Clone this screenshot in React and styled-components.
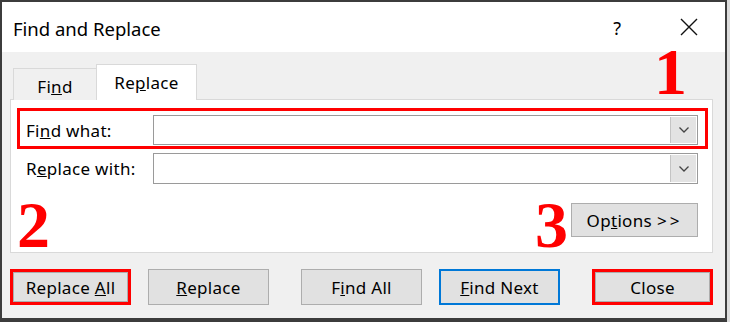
import React from "react";
import styled, { createGlobalStyle } from "styled-components";

const Global = createGlobalStyle`
  html, body { margin: 0; padding: 0; background: #dcdcdc; }
  body { font-family: "Noto Sans", "Open Sans", sans-serif; color: #000; }
`;

const Window = styled.div`
  position: relative;
  width: 727px;
  height: 322px;
  box-sizing: border-box;
  border: 2px solid #3c3c3c;
  border-bottom-width: 4px;
  background: #f0f0f0;
  display: flex;
  flex-direction: column;
`;

const TitleBar = styled.div`
  height: 50px;
  background: #fff;
  display: flex;
  align-items: center;
  padding: 0 26px 0 11px;
`;

const Title = styled.div`
  flex: 1;
  font-size: 18.5px;
  margin-top: 2px;
`;

const TitleIcons = styled.div`
  display: flex;
  align-items: center;
  gap: 58px;
`;

const Help = styled.span`
  font-size: 18px;
  margin-top: 2px;
`;

const Body = styled.div`
  flex: 1;
  display: flex;
  flex-direction: column;
  padding: 12px 12px 13px 8px;
`;

const TabRow = styled.div`
  display: flex;
  align-items: flex-end;
  margin-left: 3px;
  margin-bottom: -1px;
  position: relative;
  z-index: 1;
`;

const Tab = styled.div`
  box-sizing: border-box;
  width: ${(p) => p.$w}px;
  height: ${(p) => (p.$active ? 36 : 32)}px;
  margin-left: ${(p) => (p.$active ? -1 : 0)}px;
  border: 1px solid #d9d9d9;
  border-bottom: none;
  background: ${(p) => (p.$active ? "#fff" : "#f0f0f0")};
  display: flex;
  align-items: center;
  justify-content: center;
  font-size: 17px;
  letter-spacing: 0.3px;
  padding-top: ${(p) => (p.$active ? 0 : 3)}px;
`;

const Panel = styled.div`
  box-sizing: border-box;
  height: 154px;
  background: #fff;
  border: 1px solid #d9d9d9;
  padding: 8px 4px 0 6px;
  display: flex;
  flex-direction: column;
`;

const FieldRow = styled.div`
  display: grid;
  grid-template-columns: 127px 1fr;
  align-items: center;
  border: 3px solid ${(p) => (p.$hl ? "#ff0000" : "transparent")};
  padding: ${(p) => (p.$hl ? "4px 7px 1px 6px" : "1px 7px 1px 6px")};
`;

const Label = styled.label`
  font-size: 17px;
  letter-spacing: 0.3px;
`;

const Combo = styled.div`
  box-sizing: border-box;
  height: ${(p) => p.$h}px;
  border: 1px solid #9a9a9a;
  background: #fff;
  display: flex;
  justify-content: flex-end;
  padding: 1px;
`;

const DropButton = styled.div`
  box-sizing: border-box;
  width: 26px;
  background: #e3e3e3;
  border-left: 1px solid #c4c4c4;
  display: flex;
  align-items: center;
  justify-content: center;
`;

const OptionsRow = styled.div`
  display: flex;
  justify-content: flex-end;
  margin: 15px 10px 0 0;
`;

const Button = styled.div`
  box-sizing: border-box;
  width: ${(p) => p.$w || 121}px;
  height: ${(p) => p.$h || 36}px;
  background: #e1e1e1;
  display: flex;
  align-items: center;
  justify-content: center;
  font-size: 17px;
  letter-spacing: 0.3px;
  border: ${(p) =>
    p.$tone === "red"
      ? "3px solid #ff0000"
      : p.$tone === "blue"
      ? "2px solid #0078d7"
      : "1px solid #adadad"};
  box-shadow: ${(p) => (p.$tone === "red" ? "inset 0 0 0 1px #adadad" : "none")};
`;

const Arrows = styled.span`
  letter-spacing: 3px;
  margin-left: 5px;
`;

const ButtonRow = styled.div`
  margin-top: 16px;
  display: flex;
  justify-content: space-between;
`;

const ButtonGroup = styled.div`
  display: flex;
  gap: 17px;
`;

const Marker = styled.div`
  position: absolute;
  font-family: "Liberation Serif", "Times New Roman", serif;
  font-weight: bold;
  font-size: 66px;
  line-height: 1;
  color: #ff0000;
  left: ${(p) => p.$x}px;
  top: ${(p) => p.$y}px;
`;

const Chevron = () => (
  <svg width="12" height="8" viewBox="0 0 12 8">
    <path d="M1.5 1.5 L6 6 L10.5 1.5" fill="none" stroke="#444" strokeWidth="1.3" />
  </svg>
);

const CloseIcon = () => (
  <svg width="20" height="20" viewBox="0 0 20 20">
    <path d="M2 2 L18 18 M18 2 L2 18" stroke="#111" strokeWidth="1.4" fill="none" />
  </svg>
);

export default function App() {
  return (
    <>
      <Global />
      <Window>
        <TitleBar>
          <Title>Find and Replace</Title>
          <TitleIcons>
            <Help>?</Help>
            <CloseIcon />
          </TitleIcons>
        </TitleBar>
        <Body>
          <TabRow>
            <Tab $w={84}><span>Fi<u>n</u>d</span></Tab>
            <Tab $w={101} $active><span>Re<u>p</u>lace</span></Tab>
          </TabRow>
          <Panel>
            <FieldRow $hl>
              <Label>Fi<u>n</u>d what:</Label>
              <Combo $h={30}>
                <DropButton><Chevron /></DropButton>
              </Combo>
            </FieldRow>
            <FieldRow>
              <Label>R<u>e</u>place with:</Label>
              <Combo $h={31}>
                <DropButton><Chevron /></DropButton>
              </Combo>
            </FieldRow>
            <OptionsRow>
              <Button $w={127} $h={34}>
                <span>Op<u>t</u>ions<Arrows>&gt;&gt;</Arrows></span>
              </Button>
            </OptionsRow>
          </Panel>
          <ButtonRow>
            <ButtonGroup>
              <Button $tone="red"><span>Replace <u>A</u>ll</span></Button>
              <Button><span><u>R</u>eplace</span></Button>
            </ButtonGroup>
            <ButtonGroup>
              <Button><span>F<u>i</u>nd All</span></Button>
              <Button $tone="blue"><span><u>F</u>ind Next</span></Button>
            </ButtonGroup>
            <Button $tone="red"><span>Close</span></Button>
          </ButtonRow>
        </Body>
        <Marker $x={652} $y={37}>1</Marker>
        <Marker $x={15} $y={190}>2</Marker>
        <Marker $x={533} $y={190}>3</Marker>
      </Window>
    </>
  );
}
